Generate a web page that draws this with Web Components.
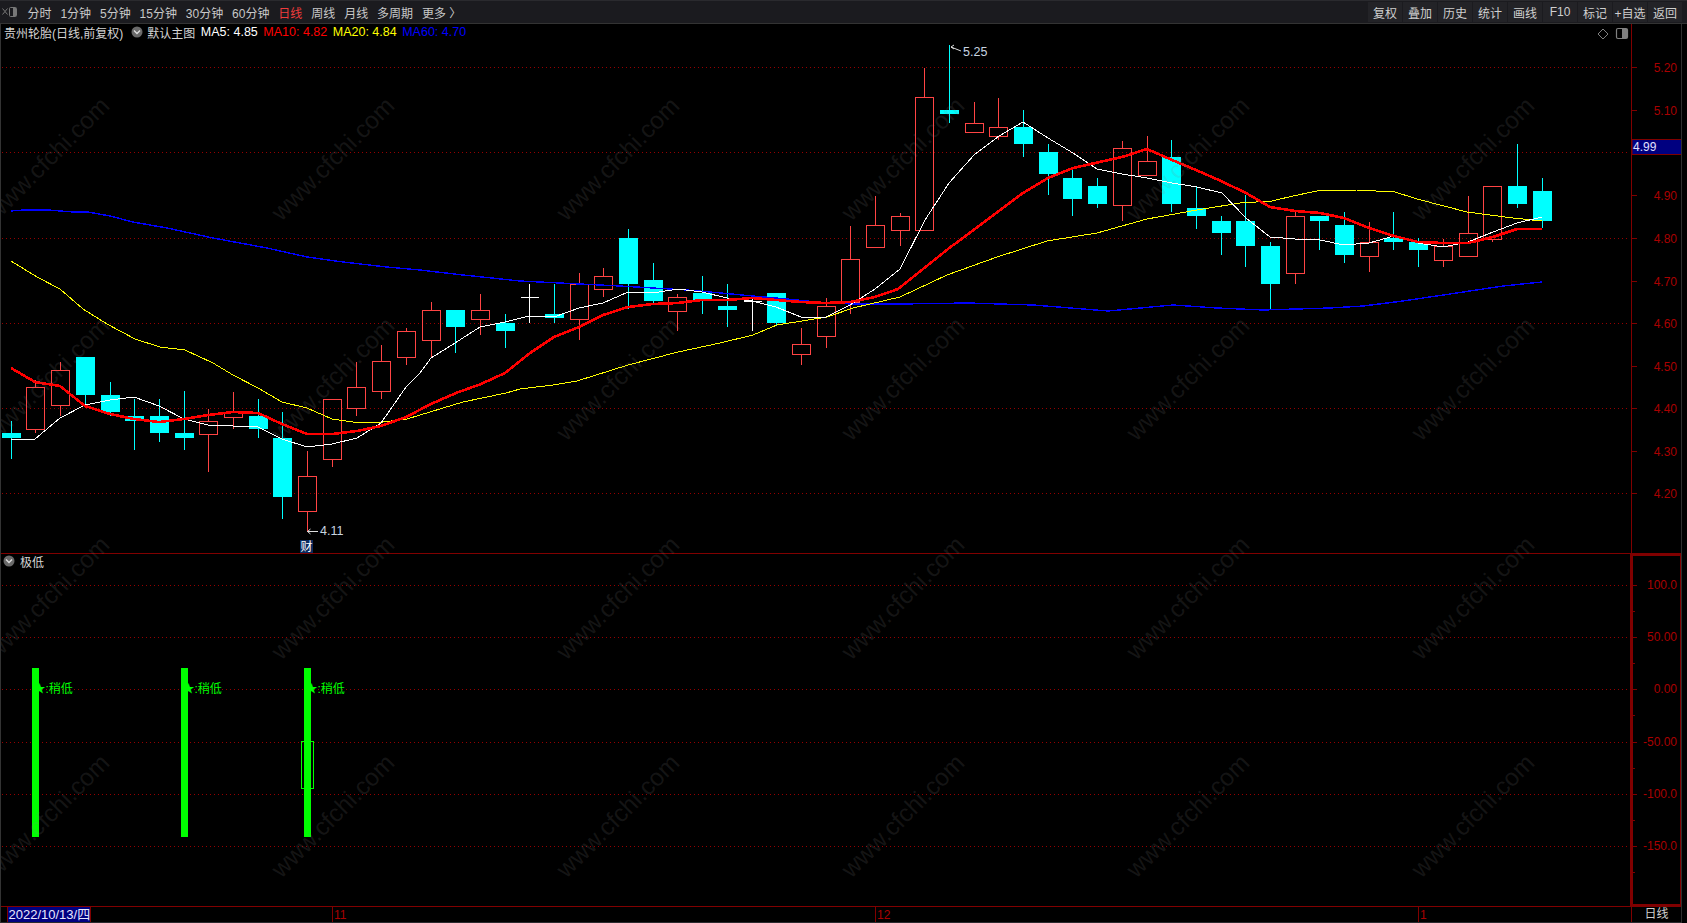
<!DOCTYPE html>
<html lang="zh">
<head>
<meta charset="utf-8">
<title>K线</title>
<style>
  html, body { margin: 0; height: 100%; background: #000; overflow: hidden; }
  body { font: 12px "Liberation Sans", "Noto Sans CJK SC", sans-serif; color: #d0d0d0; }
</style>
</head>
<body>
<stock-terminal>
  <top-toolbar slot="toolbar">
    <tool-tab>分时</tool-tab>
    <tool-tab>1分钟</tool-tab>
    <tool-tab>5分钟</tool-tab>
    <tool-tab>15分钟</tool-tab>
    <tool-tab>30分钟</tool-tab>
    <tool-tab>60分钟</tool-tab>
    <tool-tab active>日线</tool-tab>
    <tool-tab>周线</tool-tab>
    <tool-tab>月线</tool-tab>
    <tool-tab>多周期</tool-tab>
    <tool-tab>更多 〉</tool-tab>
    <tool-button slot="actions">复权</tool-button>
    <tool-button slot="actions">叠加</tool-button>
    <tool-button slot="actions">历史</tool-button>
    <tool-button slot="actions">统计</tool-button>
    <tool-button slot="actions">画线</tool-button>
    <tool-button slot="actions">F10</tool-button>
    <tool-button slot="actions">标记</tool-button>
    <tool-button slot="actions">+自选</tool-button>
    <tool-button slot="actions">返回</tool-button>
  </top-toolbar>
  <price-pane slot="price"></price-pane>
  <indicator-pane slot="indicator"></indicator-pane>
  <date-axis slot="dates"></date-axis>
  <water-mark slot="overlay"></water-mark>
</stock-terminal>

<script>
const FONT = '"Liberation Sans", "Noto Sans CJK SC", sans-serif';
const AXIS_RED = '#a80000';
const GRID_RED = '#960000';

// candles read off the chart in pixels: [high, body top, body bottom, low, kind]
// kind: c = falling (cyan), r = rising (red), w = doji (white)
const CANDLES = [
  [421,433,438,459,'c'],[380,387,429,433,'r'],[362,370,405,416,'r'],[357,357,395,405,'c'],
  [382,395,412,416,'c'],[399,416,421,450,'c'],[399,416,433,442,'c'],[391,433,438,450,'c'],
  [409,421,434,472,'r'],[392,412,417,429,'r'],[399,416,429,438,'c'],[412,438,497,519,'c'],
  [451,476,511,532,'r'],[399,399,459,467,'r'],[362,387,408,416,'r'],[345,361,391,399,'r'],
  [328,331,357,365,'r'],[302,310,340,357,'r'],[310,310,327,353,'c'],[294,310,319,335,'r'],
  [314,323,331,348,'c'],[284,297,297,323,'w'],[284,314,318,323,'c'],[273,284,319,340,'r'],
  [268,276,289,297,'r'],[229,238,284,309,'c'],[263,280,301,303,'c'],[294,297,311,331,'r'],
  [276,293,301,314,'c'],[284,306,310,327,'c'],[297,301,301,331,'w'],[293,293,323,325,'c'],
  [328,344,354,365,'r'],[298,306,336,348,'r'],[226,259,302,314,'r'],[196,225,247,247,'r'],
  [213,216,230,246,'r'],[68,97,230,230,'r'],[45,110,114,123,'c'],[102,123,132,132,'r'],
  [98,127,136,140,'r'],[110,127,144,157,'c'],[144,152,174,195,'c'],[170,178,199,216,'c'],
  [178,186,204,208,'c'],[141,148,205,221,'r'],[136,161,175,175,'r'],[140,157,204,212,'c'],
  [186,208,216,229,'c'],[216,221,233,255,'c'],[195,221,246,267,'c'],[242,246,284,310,'c'],
  [212,216,273,284,'r'],[216,216,221,250,'c'],[212,225,255,263,'c'],[222,242,256,272,'r'],
  [212,238,242,250,'c'],[238,242,250,267,'c'],[239,246,260,267,'r'],[196,233,256,256,'r'],
  [186,186,239,242,'r'],[144,186,204,208,'c'],[178,191,221,228,'c']
];

const MA5 = '11,439 35,439 60,418 85,405 110,400 134,397 159,406 184,419 208,425 233,426 258,427 282,439 307,447 332,444 357,438 381,423 406,387 420,373 431,358 455,343 480,327 505,322 529,316 554,317 579,308 603,303 628,292 653,293 678,289 702,292 727,298 752,301 776,307 801,317 826,317 850,305 875,289 900,269 925,220 949,183 974,155 999,136 1023,122 1048,138 1073,153 1097,169 1122,174 1147,178 1172,183 1197,187 1222,193 1246,218 1270,237 1295,239 1320,240 1344,245 1369,243 1394,236 1418,243 1443,247 1468,242 1493,232 1517,223 1542,217';
const MA10 = '11,368 35,382 60,386 85,406 110,414 134,419 159,422 184,419 208,415 233,412 258,413 282,424 307,434 333,434 357,431 381,426 406,417 431,404 456,393 481,384 505,373 530,353 554,337 579,327 603,315 628,307 653,304 678,303 702,300 727,300 752,298 776,300 801,302 826,303 850,302 875,297 898,289 948,249 1023,193 1048,178 1073,168 1122,157 1147,149 1172,160 1196,170 1221,181 1246,193 1270,207 1295,211 1320,213 1344,218 1369,228 1394,236 1418,242 1443,243 1468,243 1493,237 1517,229 1542,229';
const MA20 = '11,261 37,277 60,289 83,309 107,324 135,339 160,347 185,350 213,363 233,375 258,388 282,402 307,408 332,419 353,422 383,422 407,419 420,415 463,402 506,393 520,389 553,385 577,381 628,365 678,352 720,343 753,335 777,325 827,317 853,308 900,297 915,290 947,275 997,257 1047,241 1097,233 1147,219 1197,210 1240,203 1272,201 1293,196 1317,191 1357,190 1395,192 1417,199 1467,212 1513,218 1542,221';
const MA60 = '11,211 23,210 48,210 73,212 88,212 110,216 133,222 167,228 213,238 267,248 307,257 343,262 387,267 420,270 463,275 520,281 560,283 620,286 653,288 687,290 710,292 753,296 787,299 827,303 853,304 900,304 968,303 1033,305 1108,311 1173,305 1217,308 1263,310 1330,308 1363,306 1403,301 1450,294 1503,286 1542,282';

class StockTerminal extends HTMLElement {
  constructor() {
    super();
    this.attachShadow({ mode: 'open' });
    this.shadowRoot.innerHTML = `
      <style>
        :host { display: flex; flex-direction: column; width: 1687px; height: 923px; background: #000; }
        .stack { position: relative; display: flex; flex-direction: column; width: 1682px; flex: 1; box-sizing: border-box; border-left: 1px solid #333; border-right: 1px solid #2e2e2e; overflow: hidden; }
      </style>
      <slot name="toolbar"></slot>
      <div class="stack">
        <slot name="price"></slot>
        <slot name="indicator"></slot>
        <slot name="dates"></slot>
        <slot name="overlay"></slot>
      </div>
    `;
  }
}

class TopToolbar extends HTMLElement {
  constructor() {
    super();
    this.attachShadow({ mode: 'open' });
    this.shadowRoot.innerHTML = `
      <style>
        :host { display: flex; box-sizing: border-box; height: 24px; padding: 1px 5px 1px 2px; background: #1b1b1f; border-top: 1px solid #2a2a2e; border-bottom: 1px solid #333; align-items: stretch; }
        svg { width: 15px; height: 10px; align-self: center; margin-right: 10.5px; }
        .tabs { display: flex; gap: 8.9px; align-items: center; flex: 1; }
        .actions { display: flex; gap: 1px; }
      </style>
      <svg viewBox="0 0 15 10" fill="none" stroke="#777">
        <path d="M0.5 1.5 L3 4.5 L0.5 7.5 M5.5 1.5 L3 4.5 L5.5 7.5"/>
        <rect x="7.5" y="0.5" width="7" height="9" rx="1"/>
        <rect x="11" y="1" width="3" height="8" fill="#777" stroke="none"/>
      </svg>
      <div class="tabs"><slot></slot></div>
      <div class="actions"><slot name="actions"></slot></div>
    `;
  }
}

class ToolTab extends HTMLElement {
  constructor() {
    super();
    this.attachShadow({ mode: 'open' });
    this.shadowRoot.innerHTML = `
      <style>
        :host { display: block; font-size: 12px; color: #c8c8c8; white-space: nowrap; }
        :host([active]) { color: #f03c3c; }
      </style>
      <slot></slot>
    `;
  }
}

class ToolButton extends HTMLElement {
  constructor() {
    super();
    this.attachShadow({ mode: 'open' });
    this.shadowRoot.innerHTML = `
      <style>
        :host { display: flex; align-items: center; justify-content: center; width: 34px; background: #232327; font-size: 12px; color: #cfcfcf; white-space: nowrap; }
      </style>
      <slot></slot>
    `;
  }
}

class ChevronChip extends HTMLElement {
  constructor() {
    super();
    this.attachShadow({ mode: 'open' });
    this.shadowRoot.innerHTML = `
      <style>
        :host { display: inline-flex; width: 12px; height: 12px; }
      </style>
      <svg width="12" height="12" viewBox="0 0 12 12">
        <circle cx="6" cy="6" r="5.5" fill="#6a6a6a"/>
        <path d="M3 4.6 L6 7.6 L9 4.6" fill="none" stroke="#ddd" stroke-width="1.4"/>
      </svg>
    `;
  }
}

class PricePane extends HTMLElement {
  constructor() {
    super();
    this.attachShadow({ mode: 'open' });
  }

  connectedCallback() {
    this.render();
  }

  candle(kind, x, high, top, bottom, low) {
    const left = x - 9, right = x + 9;
    if (kind === 'c') {
      return `<line x1="${x}" x2="${x}" y1="${high}" y2="${low}" stroke="#0ff"/>
        <rect x="${left - 0.5}" y="${top}" width="19" height="${Math.max(bottom - top, 4)}" fill="#0ff"/>`;
    }
    if (kind === 'w') {
      return `<line x1="${x}" x2="${x}" y1="${high}" y2="${low}" stroke="#fff"/>
        <line x1="${left}" x2="${right}" y1="${top + 0.5}" y2="${top + 0.5}" stroke="#fff"/>`;
    }
    return `<line x1="${x}" x2="${x}" y1="${high}" y2="${top}" stroke="#f44"/>
      <line x1="${x}" x2="${x}" y1="${bottom}" y2="${low}" stroke="#f44"/>
      <rect x="${left}" y="${top + 0.5}" width="18" height="${bottom - top}" fill="none" stroke="#f44"/>`;
  }

  render() {
    const candles = CANDLES.map(([high, top, bottom, low, kind], i) => {
      const x = Math.floor(11.3 + 24.69 * i) + 0.5;
      return this.candle(kind, x, high, top, bottom, low);
    }).join('');

    const grid = [67, 152, 238, 323, 408, 493]
      .map(y => `<line x1="2" x2="1628" y1="${y + 0.5}" y2="${y + 0.5}"/>`).join('');

    const labels = [[67,'5.20'],[110,'5.10'],[195,'4.90'],[238,'4.80'],[281,'4.70'],[323,'4.60'],[366,'4.50'],[408,'4.40'],[451,'4.30'],[493,'4.20']];
    const ticks = [...labels.map(l => l[0]), 152]
      .map(y => `<line x1="1632" x2="1637" y1="${y + 0.5}" y2="${y + 0.5}"/>`).join('');
    const axisText = labels
      .map(([y, t]) => `<text x="1677" y="${y + 5}" text-anchor="end">${t}</text>`).join('');

    this.shadowRoot.innerHTML = `
      <style>
        :host { display: grid; grid-template-columns: 1630px 51px; height: 530px; border-bottom: 1px solid #800000; box-sizing: border-box; position: relative; font: 12px ${FONT}; }
        svg { display: block; }
        .legend { position: absolute; left: 3px; top: 0; display: flex; align-items: center; height: 16px; white-space: nowrap; color: #d4d4d4; }
        .legend span { margin-right: 5.5px; }
        .legend .ma { font-size: 12.5px; }
        .legend .name { margin-right: 0; }
        chevron-chip { margin: 0 4px 0 8px; }
        .corner { position: absolute; left: 1596px; top: 3px; }
        .axis { border-left: 1px solid #800000; }
        .axis text { fill: ${AXIS_RED}; font: 12px ${FONT}; }
        .label { fill: #c8d4e0; font: 12.5px ${FONT}; }
        .cai { fill: #fff; font: 12px ${FONT}; }
      </style>
      <svg class="chart" width="1630" height="529" viewBox="1 24 1630 529">
        <g stroke="${GRID_RED}" stroke-dasharray="1 3" shape-rendering="crispEdges">${grid}</g>
        <g shape-rendering="crispEdges">${candles}</g>
        <g fill="none" stroke-linejoin="round" shape-rendering="crispEdges">
          <polyline points="${MA60}" stroke="#0000ff" stroke-width="1.4"/>
          <polyline points="${MA20}" stroke="#ffff00" stroke-width="1"/>
          <polyline points="${MA5}" stroke="#ffffff" stroke-width="1"/>
          <polyline points="${MA10}" stroke="#ff0000" stroke-width="2.6"/>
        </g>
        <path d="M951 47 L961 51 M951 47 l3 -2 M951 47 l3 2" stroke="#ddd" fill="none"/>
        <text class="label" x="963" y="56">5.25</text>
        <path d="M307.5 531.5 H318 M307.5 531.5 l3 -2.5 M307.5 531.5 l3 2.5" stroke="#ddd" fill="none"/>
        <text class="label" x="320" y="535">4.11</text>
        <rect x="300" y="540" width="13" height="13" fill="#0a2a5e"/>
        <text class="cai" x="300.5" y="551">财</text>
      </svg>
      <svg class="axis" width="50" height="529" viewBox="1632 24 50 529">
        <g stroke="#800000" shape-rendering="crispEdges">${ticks}</g>
        ${axisText}
        <rect x="1632" y="139.5" width="50" height="15" fill="#000080" stroke="#800000"/>
        <text x="1633" y="151" style="fill:#e0e0ff">4.99</text>
      </svg>
      <div class="legend">
        <span class="name">贵州轮胎(日线,前复权)</span>
        <chevron-chip></chevron-chip>
        <span>默认主图</span>
        <span class="ma" style="color:#fff">MA5: 4.85</span>
        <span class="ma" style="color:#f00">MA10: 4.82</span>
        <span class="ma" style="color:#ff0">MA20: 4.84</span>
        <span class="ma" style="color:#00f">MA60: 4.70</span>
      </div>
      <svg class="corner" width="34" height="14" viewBox="0 0 34 14" fill="none" stroke="#808080">
        <path d="M6 2 L11 7 L6 12 L1 7 Z"/>
        <rect x="19.5" y="1.5" width="11" height="10" rx="1.5" stroke-width="1.2"/>
        <rect x="25" y="2" width="5" height="9" fill="#808080" stroke="none"/>
      </svg>
    `;
  }
}

class IndicatorPane extends HTMLElement {
  constructor() {
    super();
    this.attachShadow({ mode: 'open' });
  }

  connectedCallback() {
    const levels = [[585,'100.0'],[637,'50.00'],[689,'0.00'],[742,'-50.00'],[794,'-100.0'],[846,'-150.0']];
    const grid = levels
      .map(([y]) => `<line x1="2" x2="1628" y1="${y + 0.5}" y2="${y + 0.5}"/>`).join('');
    const ticks = levels
      .map(([y]) => `<line x1="1633" x2="1637" y1="${y + 0.5}" y2="${y + 0.5}"/>`).join('');
    const minor = [611, 663, 715, 768, 820, 872]
      .map(y => `<line x1="1633" x2="1635" y1="${y + 0.5}" y2="${y + 0.5}"/>`).join('');
    const axisText = levels
      .map(([y, t]) => `<text x="1677" y="${y + 4}" text-anchor="end">${t}</text>`).join('');

    const signals = [32, 181, 304].map(x => `
      <rect x="${x}" y="668" width="7" height="169" fill="#0f0"/>
      <text class="signal" x="${x + 1.5}" y="693">★:稍低</text>`).join('');

    this.shadowRoot.innerHTML = `
      <style>
        :host { display: grid; grid-template-columns: 1630px 51px; height: 352px; position: relative; font: 12px ${FONT}; }
        svg { display: block; }
        .legend { position: absolute; left: 2px; top: 0; display: flex; align-items: center; gap: 5px; height: 14px; color: #d4d4d4; }
        .axis { box-sizing: border-box; border: 2px solid #800000; }
        .axis text { fill: ${AXIS_RED}; font: 12px ${FONT}; }
        .signal { fill: #0f0; font: 12px ${FONT}; }
      </style>
      <svg width="1630" height="352" viewBox="1 554 1630 352">
        <line x1="1630.5" x2="1630.5" y1="554" y2="906" stroke="#800000"/>
        <g stroke="${GRID_RED}" stroke-dasharray="1 3" shape-rendering="crispEdges">${grid}</g>
        ${signals}
        <rect x="301.5" y="741.5" width="12" height="47" fill="none" stroke="#0f0" shape-rendering="crispEdges"/>
      </svg>
      <svg class="axis" width="51" height="352" viewBox="1633 556 47 348">
        <g stroke="#800000" shape-rendering="crispEdges">${ticks}${minor}</g>
        ${axisText}
      </svg>
      <div class="legend"><chevron-chip></chevron-chip><span>极低</span></div>
    `;
  }
}

class DateAxis extends HTMLElement {
  constructor() {
    super();
    this.attachShadow({ mode: 'open' });
    const marks = [[332,'11'],[875,'12'],[1418,'1']];
    this.shadowRoot.innerHTML = `
      <style>
        :host { display: block; position: relative; height: 17px; box-sizing: border-box; border-top: 1px solid #800000; border-bottom: 1px solid #2a2a2e; font: 12px ${FONT}; }
        .bar { display: flex; justify-content: space-between; height: 15px; }
        .date { margin-left: 5.5px; padding: 0 0 0 1px; width: 84px; box-sizing: border-box; background: #000080; color: #e8e8ff; border: solid #800000; border-width: 0 1px; font-size: 13px; line-height: 15px; white-space: nowrap; }
        .period { width: 50px; text-align: center; color: #d0d0d0; line-height: 15px; border-left: 1px solid #800000; box-sizing: border-box; }
        svg { position: absolute; left: 0; top: 0; }
        text { fill: ${AXIS_RED}; font: 12px ${FONT}; }
      </style>
      <svg width="1630" height="15" viewBox="1 906 1630 15">
        ${marks.map(([x, t]) => `<line x1="${x + 0.5}" x2="${x + 0.5}" y1="906" y2="921" stroke="#800000"/>
          <text x="${x + 2}" y="918">${t}</text>`).join('')}
      </svg>
      <div class="bar">
        <div class="date">2022/10/13/四</div>
        <div class="period">日线</div>
      </div>
    `;
  }
}

class WaterMark extends HTMLElement {
  constructor() {
    super();
    this.attachShadow({ mode: 'open' });
    let marks = '';
    [159, 379, 598, 816].forEach(y => {
      for (let k = 0; k < 6; k++) {
        const x = 48 + 285 * k;
        marks += `<text x="${x}" y="${y + 8}" text-anchor="middle" transform="rotate(-45 ${x} ${y})">www.cfchi.com</text>`;
      }
    });
    this.shadowRoot.innerHTML = `
      <style>
        :host { position: absolute; left: 0; top: 0; pointer-events: none; }
        svg { display: block; }
        text { fill: rgba(128, 128, 128, 0.17); font: 24.5px "Liberation Sans", sans-serif; }
      </style>
      <svg width="1680" height="899" viewBox="1 24 1680 899">${marks}</svg>
    `;
  }
}

customElements.define('stock-terminal', StockTerminal);
customElements.define('top-toolbar', TopToolbar);
customElements.define('tool-tab', ToolTab);
customElements.define('tool-button', ToolButton);
customElements.define('chevron-chip', ChevronChip);
customElements.define('price-pane', PricePane);
customElements.define('indicator-pane', IndicatorPane);
customElements.define('date-axis', DateAxis);
customElements.define('water-mark', WaterMark);
</script>
</body>
</html>
